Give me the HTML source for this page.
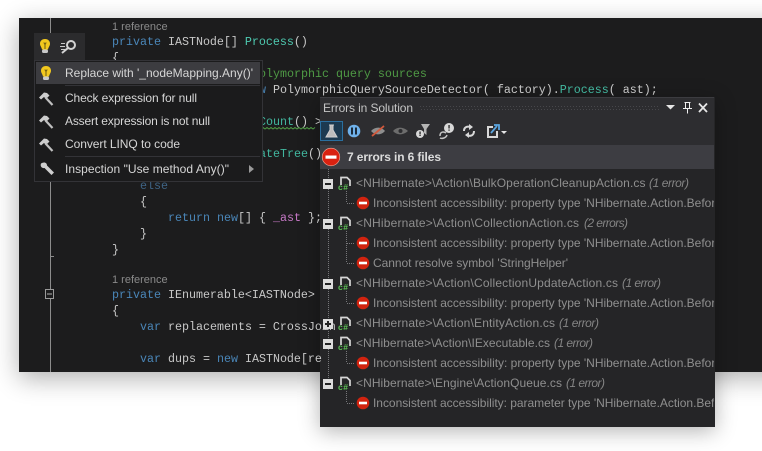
<!DOCTYPE html>
<html><head><meta charset="utf-8">
<style>
html,body{margin:0;padding:0;background:#fff;width:762px;height:451px;overflow:hidden}
#ed{position:absolute;left:19px;top:18px;width:780px;height:354px;background:#1c1c1d;box-shadow:0 6px 24px rgba(0,0,0,.32)}
#pn{position:absolute;left:320px;top:97px;width:395px;height:330px;background:#252527;box-shadow:0 4px 20px rgba(0,0,0,.3)}
svg{position:absolute;left:0;top:0}
.m{font:11.67px "Liberation Mono",monospace;fill:#c8c8c8;white-space:pre}
.k{fill:#4a86b8}.t{fill:#4ec9b0}.c{fill:#4f9a45}.d{fill:#3f6485}.p{fill:#c678c6}.g{fill:#42b79f}
.r{font:11px "Liberation Sans",sans-serif;fill:#8a8a8a}
.u{font:12px "Liberation Sans",sans-serif;fill:#d6d6d6}
.f{font:12px "Liberation Sans",sans-serif;fill:#8f8f8f}
.i{font:italic 12px "Liberation Sans",sans-serif;fill:#858585}
</style></head><body>
<div id="ed"></div><div id="pn"></div>
<svg width="762" height="451" viewBox="0 0 762 451" xmlns="http://www.w3.org/2000/svg">
<defs>
<clipPath id="pc"><rect x="320" y="97" width="394" height="330"/></clipPath>
<clipPath id="ec"><rect x="19" y="18" width="743" height="354"/></clipPath>
<g id="err"><circle r="6.3" fill="#d2230f"/><rect x="-4" y="-1.3" width="8" height="2.6" fill="#fff"/></g>
<g id="bulb"><path d="M0-7C-3.400-7-5-4.600-5-2.400C-5 0-3.400 1-3 3.500H3C3.400 1 5 0 5-2.400C5-4.600 3.400-7 0-7Z" fill="#f2c81e"/><path d="M-1.200-3.500L0-1.500L1.200-3.500M0-1.500V3" stroke="#6b5a10" fill="none"/><rect x="-3" y="3.500" width="6" height="3.500" rx="1.500" fill="#c9c9c9"/></g>
<g id="ham"><path d="M-7-1.500L-2-6.500L1-6L3.500-3.500L0 0L-2-2L-5 .5Z" fill="#cdcdcd"/><path d="M-.5-1.500L6.500 6" stroke="#c0c0c0" stroke-width="2.200"/></g>
<g id="doc"><path d="M1.500 8V.5H7.500L10.500 3.500V9" fill="none" stroke="#d6d6d6" stroke-width="1.700"/><rect x="-1.500" y="8" width="10" height="5" fill="#252527"/><text x="-1.500" y="13" font-family="Liberation Sans" font-size="8.500" font-weight="bold" fill="#5cc055" textLength="10">c#</text></g>
<g id="mn"><rect width="10" height="10" fill="#dcdcdc"/><rect x="2" y="4" width="6" height="2" fill="#222"/></g>
<g id="pl"><rect width="10" height="10" fill="#dcdcdc"/><rect x="2" y="4" width="6" height="2" fill="#222"/><rect x="4" y="2" width="2" height="6" fill="#222"/></g>
</defs>

<g clip-path="url(#ec)">
<path d="M50.500 18V372" stroke="#8c8c8c"/>
<path d="M50 256.500H54" stroke="#8c8c8c"/>
<rect x="45.500" y="289.500" width="8" height="9" fill="#1c1c1d" stroke="#9a9a9a"/><path d="M47 294H52" stroke="#b0b0b0"/>
<text class="r" x="112" y="30">1 reference</text>
<text class="m" x="112" y="45"><tspan class="k">private</tspan> IASTNode[] <tspan class="t">Process</tspan>()</text>
<text class="m" x="112" y="61">{</text>
<text class="m c" x="252" y="77">polymorphic query sources</text>
<text class="m" x="245" y="93"><tspan class="k">new</tspan> PolymorphicQuerySourceDetector( factory).<tspan class="g">Process</tspan>( ast);</text>
<text class="m g" x="259" y="125">Count<tspan fill="#c8c8c8" class="m">() &gt;</tspan></text>
<path d="M259 127.500l2 1.500l2-1.500l2 1.500l2-1.500l2 1.500l2-1.500l2 1.500l2-1.500l2 1.500l2-1.500l2 1.500l2-1.500l2 1.500l2-1.500l2 1.500l2-1.500l2 1.500l2-1.500l2 1.500l2-1.500l2 1.500l2-1.500l2 1.500l2-1.500l2 1.500l2-1.500l2 1.500l2-1.500" fill="none" stroke="#4f9a45"/>
<text class="m" x="259" y="157"><tspan class="g">ateTree</tspan>()</text>
<text class="m d" x="140" y="189">else</text>
<text class="m" x="140" y="205">{</text>
<text class="m" x="168" y="221"><tspan class="k">return</tspan> <tspan class="k">new</tspan>[] { <tspan class="p">_ast</tspan> };</text>
<text class="m" x="140" y="237">}</text>
<text class="m" x="112" y="253">}</text>
<text class="r" x="112" y="283">1 reference</text>
<text class="m" x="112" y="298"><tspan class="k">private</tspan> IEnumerable&lt;IASTNode&gt;</text>
<text class="m" x="112" y="314">{</text>
<text class="m" x="140" y="330"><tspan class="k">var</tspan> replacements = CrossJoin</text>
<text class="m" x="140" y="362"><tspan class="k">var</tspan> dups = <tspan class="k">new</tspan> IASTNode[re</text>
</g>

<!-- lightbulb bar and menu -->
<rect x="34" y="33" width="51" height="28" fill="#2b2b2d"/>
<use href="#bulb" x="45" y="46"/>
<path d="M61 43.500H65M60 46.500H65M61 49.500H65" stroke="#c8c8c8"/>
<circle cx="71" cy="45" r="4" fill="none" stroke="#d2d2d2" stroke-width="2"/><path d="M68 48L62 53" stroke="#d2d2d2" stroke-width="2"/>
<rect x="34.500" y="60.500" width="228" height="121" fill="#1b1b1c" stroke="#333337"/>
<rect x="36" y="62" width="224" height="22" fill="#3c3c40"/>
<path d="M65 85.500H260M65 156.500H260" stroke="#333337"/>
<use href="#bulb" x="46" y="73"/>
<text class="u" x="65" y="77" textLength="188">Replace with '_nodeMapping.Any()'</text>
<use href="#ham" x="46" y="99"/>
<text class="u" x="65" y="102" textLength="132">Check expression for null</text>
<use href="#ham" x="46" y="122"/>
<text class="u" x="65" y="125" textLength="145">Assert expression is not null</text>
<use href="#ham" x="46" y="145"/>
<text class="u" x="65" y="148" textLength="115">Convert LINQ to code</text>
<path d="M41 163.500C44 161.500 47 162.500 47 165.500L54 172.500L51.500 175L44.500 168C41.500 168.500 40 166 41 163.500Z" fill="#cfcfcf"/>
<text class="u" x="65" y="173" textLength="164">Inspection "Use method Any()"</text>
<path d="M249 165V173L254 169Z" fill="#9a9a9a"/>

<!-- panel -->
<g clip-path="url(#pc)">
<rect x="320" y="97" width="395" height="48" fill="#2d2d30"/>
<rect x="320" y="97" width="395" height="1" fill="#3c3c40"/>
<rect x="320" y="145" width="395" height="24" fill="#3d3d42"/>
<text x="323" y="112" font-family="Liberation Sans" font-size="12" fill="#c4c4c4" textLength="90">Errors in Solution</text>
<path d="M420 106.500H660M421 109.500H660" stroke="#47474b" stroke-dasharray="1 2"/>
<path d="M666 105H675L670.500 109.500Z" fill="#e6e6e6"/>
<path d="M684.500 102.500H690.500M685.500 102.500V108M689.500 102.500V108M683 108.500H692M687.500 108.500V113.500" stroke="#f0f0f0" fill="none"/>
<path d="M699 103.500L707 112M707 103.500L699 112" stroke="#e6e6e6" stroke-width="1.800"/>

<!-- toolbar -->
<rect x="320.500" y="121.500" width="22" height="19" fill="#1c3a50" stroke="#2a6f9f"/>
<path d="M329 125H334M330 125V130L326 137H337L333 130V125" fill="#bdbdbd" stroke="#d0d0d0"/>
<circle cx="354" cy="131" r="6.300" fill="#6fb1ea"/><rect x="351" y="127.500" width="2" height="7" fill="#1a2a3a"/><rect x="355" y="127.500" width="2" height="7" fill="#1a2a3a"/>
<path d="M371 131C375 126.500 381 126.500 385 131C381 135.500 375 135.500 371 131Z" fill="#8e8e8e"/><path d="M372 136L384 126" stroke="#d0583c" stroke-width="1.800"/>
<path d="M393 131C397 126.500 403 126.500 408 131C403 135.500 397 135.500 393 131Z" fill="#6d6d6d"/><circle cx="400.500" cy="131" r="2" fill="#2d2d30"/>
<path d="M421 124H430L426.500 129V135L424 133V129Z" fill="#b4b4b4"/><circle cx="420" cy="134" r="4" fill="#d8d8d8"/><rect x="419.400" y="131.500" width="1.300" height="3" fill="#222"/><rect x="419.400" y="135" width="1.300" height="1" fill="#222"/>
<circle cx="449" cy="128" r="5" fill="#d8d8d8"/><rect x="448.400" y="125" width="1.300" height="3.500" fill="#222"/><rect x="448.400" y="129.500" width="1.300" height="1.200" fill="#222"/><path d="M440 136C440 132 443 131 446 133M447 135C446 138 442 139 440 138" stroke="#c4c4c4" stroke-width="1.500" fill="none"/>
<path d="M464 131C464 127 467 126 471 127M474 131C474 135 471 137 467 135" stroke="#d8d8d8" stroke-width="2" fill="none"/><path d="M469 124L473 127L469 130ZM469 132L465 135L469 138Z" fill="#d8d8d8"/>
<path d="M493 127H488V137H497V131" fill="none" stroke="#d8d8d8" stroke-width="2"/><path d="M491 133L497 126M494 125H499V130" fill="none" stroke="#5aa5e0" stroke-width="1.800"/>
<path d="M501 131H507L504 134Z" fill="#e6e6e6"/>

<!-- header -->
<circle cx="331" cy="157" r="8.800" fill="#d92110" stroke="#f0b0a0" stroke-width=".6"/>
<rect x="325.500" y="155.500" width="11" height="3.200" fill="#fff"/>
<text x="347" y="161" font-family="Liberation Sans" font-size="12" font-weight="bold" fill="#dcdcdc" textLength="94">7 errors in 6 files</text>

<!-- dotted tree lines -->
<path d="M328.500 169V388" stroke="#77777a" stroke-dasharray="1 1"/>
<path d="M346.500 191V203M346.500 231V263M346.500 291V303M346.500 351V363M346.500 391V403" stroke="#77777a" stroke-dasharray="1 1"/>
<path d="M347 203.500H355M347 243.500H355M347 263.500H355M347 303.500H355M347 363.500H355M347 403.500H355" stroke="#77777a" stroke-dasharray="1 1"/>

<use href="#mn" x="323" y="179"/><use href="#doc" x="339.500" y="177"/>
<text class="f" x="356" y="187" textLength="289.500">&lt;NHibernate&gt;\Action\BulkOperationCleanupAction.cs</text>
<text class="i" x="649" y="187" textLength="40">(1 error)</text>
<use href="#err" x="363" y="203"/>
<text class="f" x="373" y="207" textLength="349">Inconsistent accessibility: property type 'NHibernate.Action.Before</text>

<use href="#mn" x="323" y="219"/><use href="#doc" x="339.500" y="217"/>
<text class="f" x="356" y="227" textLength="223">&lt;NHibernate&gt;\Action\CollectionAction.cs</text>
<text class="i" x="584" y="227" textLength="44">(2 errors)</text>
<use href="#err" x="363" y="243"/>
<text class="f" x="373" y="247" textLength="349">Inconsistent accessibility: property type 'NHibernate.Action.Before</text>
<use href="#err" x="363" y="263"/>
<text class="f" x="373" y="267" textLength="195">Cannot resolve symbol 'StringHelper'</text>

<use href="#mn" x="323" y="279"/><use href="#doc" x="339.500" y="277"/>
<text class="f" x="356" y="287" textLength="262">&lt;NHibernate&gt;\Action\CollectionUpdateAction.cs</text>
<text class="i" x="622" y="287" textLength="39">(1 error)</text>
<use href="#err" x="363" y="303"/>
<text class="f" x="373" y="307" textLength="349">Inconsistent accessibility: property type 'NHibernate.Action.Before</text>

<use href="#pl" x="323" y="319"/><use href="#doc" x="339.500" y="317"/>
<text class="f" x="356" y="327" textLength="199">&lt;NHibernate&gt;\Action\EntityAction.cs</text>
<text class="i" x="559" y="327" textLength="40">(1 error)</text>

<use href="#mn" x="323" y="339"/><use href="#doc" x="339.500" y="337"/>
<text class="f" x="356" y="347" textLength="194">&lt;NHibernate&gt;\Action\IExecutable.cs</text>
<text class="i" x="554" y="347" textLength="39">(1 error)</text>
<use href="#err" x="363" y="363"/>
<text class="f" x="373" y="367" textLength="349">Inconsistent accessibility: property type 'NHibernate.Action.Before</text>

<use href="#mn" x="323" y="379"/><use href="#doc" x="339.500" y="377"/>
<text class="f" x="356" y="387" textLength="206">&lt;NHibernate&gt;\Engine\ActionQueue.cs</text>
<text class="i" x="566" y="387" textLength="39">(1 error)</text>
<use href="#err" x="363" y="403"/>
<text class="f" x="373" y="407" textLength="348">Inconsistent accessibility: parameter type 'NHibernate.Action.Befo</text>
</g>
</svg>
</body></html>
